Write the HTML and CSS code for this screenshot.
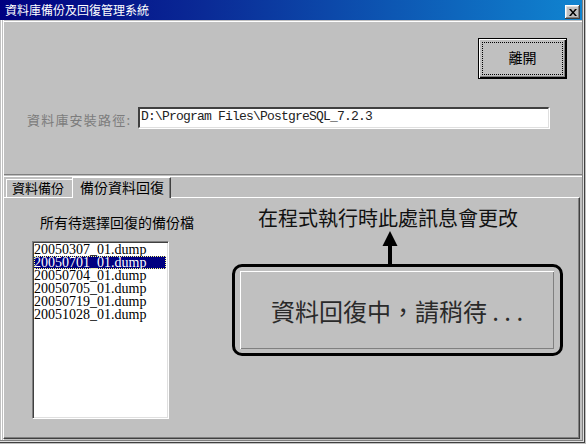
FILE: index.html
```html
<!DOCTYPE html>
<html lang="zh-Hant">
<head>
<meta charset="utf-8">
<title>資料庫備份及回復管理系統</title>
<link rel="stylesheet" href="styles.css">
</head>
<body>
<div class="window">
  <div class="titlebar">
    <span class="title">資料庫備份及回復管理系統</span>
    <span class="close"><svg width="8" height="7" viewBox="0 0 8 7"><path d="M0 0h2l2 2.5L6 0h2L5 3.5 8 7H6L4 4.5 2 7H0l3-3.5z" fill="#000"/></svg></span>
  </div>
  <div class="client">
    <div class="top">
      <div class="btnrow">
        <button class="btn"><span class="focus">離開</span></button>
      </div>
      <div class="pathrow">
        <span class="pathlabel">資料庫安裝路徑:</span>
        <div class="textbox">D:\Program Files\PostgreSQL_7.2.3</div>
      </div>
    </div>
    <div class="separator"></div>
    <div class="tabs">
      <div class="tab">資料備份</div>
      <div class="tab active">備份資料回復</div>
    </div>
    <div class="panel">
      <div class="leftcol">
        <div class="listlabel">所有待選擇回復的備份檔</div>
        <div class="listbox">
          <div class="item">20050307_01.dump</div>
          <div class="item selected">20050701_01.dump</div>
          <div class="item">20050704_01.dump</div>
          <div class="item">20050705_01.dump</div>
          <div class="item">20050719_01.dump</div>
          <div class="item">20051028_01.dump</div>
        </div>
      </div>
      <div class="rightcol">
        <div class="note">在程式執行時此處訊息會更改</div>
        <svg class="arrow" width="16" height="35" viewBox="0 0 16 35"><path d="M8 2L15.5 17H0.5z" fill="#000"/><rect x="6" y="16" width="4" height="19" fill="#000"/></svg>
        <div class="callout">
          <div class="msgbox">資料回復中，請稍待 . . .</div>
        </div>
      </div>
    </div>
  </div>
</div>
</body>
</html>
```

FILE: styles.css
```css
html, body {
  margin: 0;
  padding: 0;
  background: #c0c0c0;
}

body {
  font-family: "Noto Sans CJK TC", "Noto Sans CJK SC", sans-serif;
  color: #000;
}

.window {
  width: 586px;
  height: 444px;
  box-sizing: border-box;
  padding: 0 4px 4px 0;
  background: #c0c0c0;
  display: flex;
  flex-direction: column;
  overflow: hidden;
  box-shadow: inset -1px -1px 0 #c0c0c0, inset -2px -2px 0 #404040,
              inset -3px -3px 0 #dfdfdf, inset -4px -4px 0 #808080;
}

.titlebar {
  height: 20px;
  flex: none;
  background: linear-gradient(90deg, #000080 0%, #0a2a96 35%, #1084d0 100%);
  display: flex;
  justify-content: space-between;
  padding: 0 2px 0 5px;
  color: #fff;
  font-size: 12px;
  line-height: 20px;
}

.title {
  letter-spacing: 0;
}

.close {
  align-self: flex-end;
  margin-bottom: 1px;
  width: 15px;
  height: 14px;
  box-sizing: border-box;
  background: #c0c0c0;
  display: flex;
  align-items: center;
  justify-content: center;
  box-shadow: inset -1px -1px 0 #404040, inset 1px 1px 0 #fff,
              inset -2px -2px 0 #808080, inset 2px 2px 0 #dfdfdf;
}

.client {
  flex: 1;
  display: flex;
  flex-direction: column;
  box-shadow: inset 1px 0 0 #c0c0c0, inset 2px 0 0 #fff,
              inset 3px 0 0 #c0c0c0, inset 4px 0 0 #fff;
}

.top {
  height: 153px;
  margin-top: 1px;
  margin-left: 3px;
  border-top: 1px solid #fff;
  box-sizing: border-box;
  flex: none;
}

.btnrow {
  display: flex;
  justify-content: flex-end;
  padding: 16px 15px 0 0;
}

.btn {
  width: 89px;
  height: 41px;
  box-sizing: border-box;
  margin: 0;
  padding: 3px;
  border: 1px solid #000;
  background: #c0c0c0;
  font-family: inherit;
  font-size: 14px;
  color: #000;
  display: flex;
  box-shadow: inset 1px 1px 0 #fff, inset -1px -1px 0 #000,
              inset -2px -2px 0 #808080;
}

.focus {
  flex: 1;
  border: 1px dotted #000;
  display: flex;
  align-items: center;
  justify-content: center;
  padding-bottom: 3px;
}

.pathrow {
  display: flex;
  align-items: flex-start;
  margin-top: 28px;
  padding-left: 24px;
}

.pathlabel {
  width: 111px;
  flex: none;
  font-size: 13px;
  letter-spacing: 1.2px;
  color: #7c7c7c;
  line-height: 16px;
  padding-top: 5px;
}

.textbox {
  width: 411px;
  height: 21px;
  box-sizing: border-box;
  background: #fff;
  border-top: 2px solid #404040;
  border-left: 2px solid #404040;
  border-right: 1px solid #dfdfdf;
  border-bottom: 1px solid #dfdfdf;
  box-shadow: inset -1px -1px 0 #fff, 1px 1px 0 #fff;
  padding-left: 1px;
  font-family: "Liberation Mono", monospace;
  font-size: 13px;
  letter-spacing: -0.8px;
  line-height: 16px;
  color: #222;
  white-space: nowrap;
  overflow: hidden;
}

.separator {
  height: 1px;
  margin-left: 4px;
  border-top: 1px solid #808080;
  border-bottom: 1px solid #fff;
  flex: none;
}

.tabs {
  display: flex;
  align-items: flex-start;
  padding-left: 6px;
  height: 20px;
  flex: none;
  position: relative;
  z-index: 1;
}

.tab {
  box-sizing: border-box;
  width: 66px;
  height: 18px;
  margin-top: 2px;
  border-left: 1px solid #fff;
  border-top: 1px solid #fff;
  font-size: 13px;
  line-height: 16px;
  padding-left: 5px;
  white-space: nowrap;
}

.tab.active {
  width: 99px;
  height: 21px;
  margin-top: 0;
  background: #c0c0c0;
  font-size: 14px;
  line-height: 17px;
  padding-left: 7px;
  padding-top: 1px;
  border-right: 1px solid #404040;
  box-shadow: inset -1px 0 0 #808080;
}

.panel {
  flex: 1;
  margin: 0 2px 1px 3px;
  border-top: 1px solid #fff;
  border-left: 1px solid #fff;
  border-right: 1px solid #404040;
  border-bottom: 1px solid #404040;
  box-shadow: inset -1px -1px 0 #808080;
  display: flex;
}

.leftcol {
  width: 228px;
  flex: none;
}

.listlabel {
  margin: 16px 0 0 36px;
  font-size: 14px;
  line-height: 16px;
  white-space: nowrap;
}

.listbox {
  margin: 11px 0 0 28px;
  width: 137px;
  height: 178px;
  box-sizing: border-box;
  background: #fff;
  border-top: 1px solid #808080;
  border-left: 1px solid #808080;
  border-right: 1px solid #fff;
  border-bottom: 1px solid #fff;
  box-shadow: inset 1px 1px 0 #404040, inset -1px -1px 0 #dfdfdf;
  padding: 1px 2px 1px 1px;
}

.item {
  height: 13px;
  font-family: "Liberation Serif", serif;
  font-size: 14px;
  line-height: 13px;
  padding-left: 0;
  white-space: nowrap;
  color: #000;
}

.item.selected {
  background: #000080;
  color: #fff;
  outline: 1px dotted #ffff80;
  outline-offset: -1px;
}

.rightcol {
  flex: 1;
  display: flex;
  flex-direction: column;
}

.note {
  margin: 9px 0 0 26px;
  font-size: 20px;
  line-height: 22px;
  color: #111;
  white-space: nowrap;
}

.arrow {
  display: block;
  margin-left: 150px;
}

.callout {
  width: 331px;
  box-sizing: border-box;
  border: 3px solid #000;
  border-radius: 10px;
  padding: 4px 6px 4px 5px;
}

.msgbox {
  height: 78px;
  box-sizing: border-box;
  background: #c0c0c0;
  box-shadow: inset 1px 1px 0 #fff, inset -1px -1px 0 #808080;
  display: flex;
  align-items: center;
  justify-content: center;
  font-size: 24px;
  color: #2a2a2a;
  white-space: pre;
  padding-top: 1px;
}
```
